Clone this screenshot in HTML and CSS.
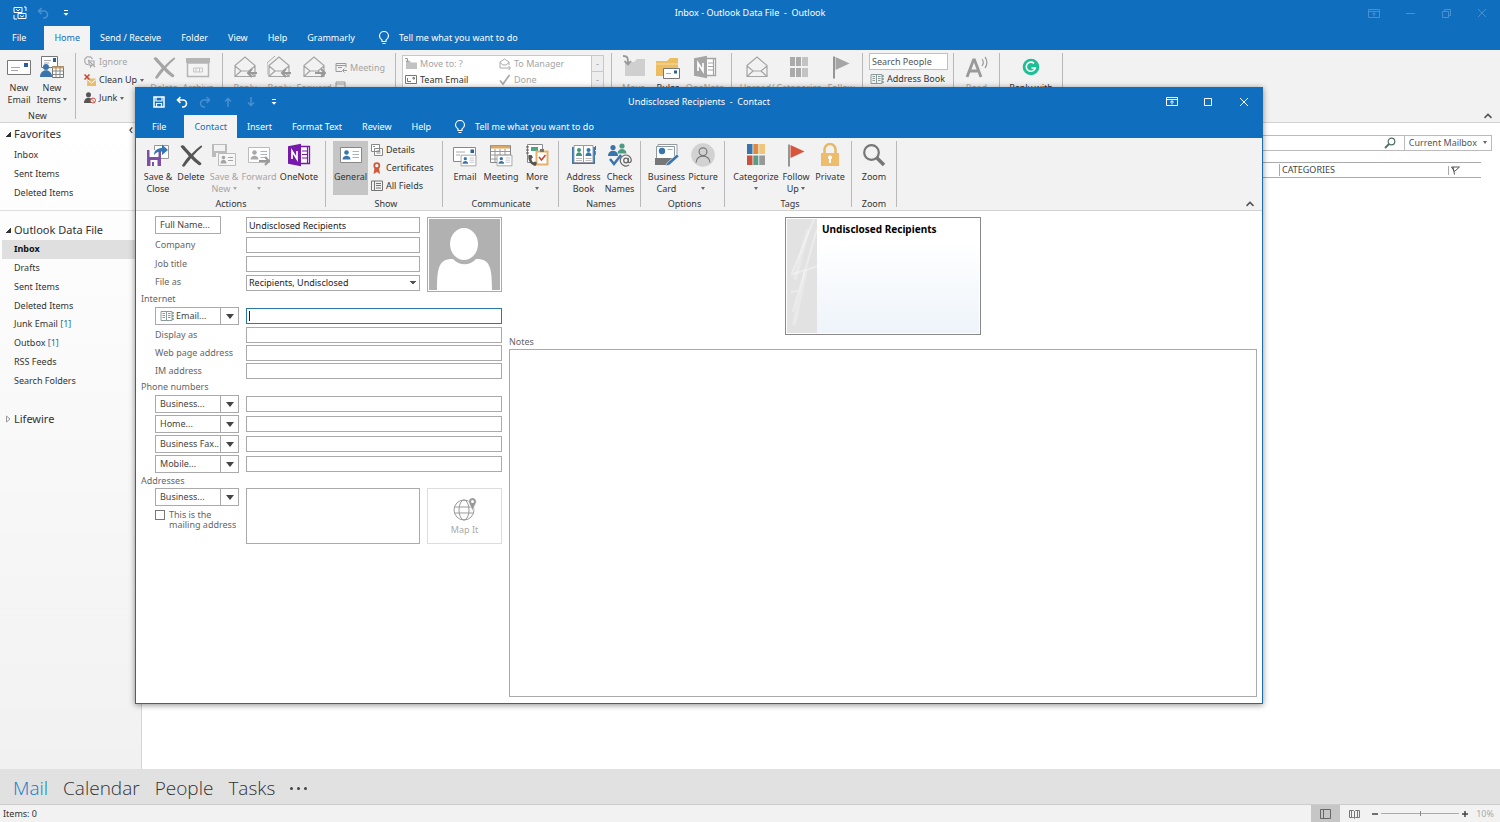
FILE: index.html
```html
<!DOCTYPE html>
<html lang="en">
<head>
    <meta charset="UTF-8" />
    <meta name="viewport" content="width=device-width, initial-scale=1.0"/>
    <title>Inbox - Outlook Data File - Outlook</title>
    <link rel="stylesheet" href="styles.css">
</head>
<body>

<!-- shared icons -->
<svg class="sprite" aria-hidden="true">
    <symbol id="i-bulb" viewBox="0 0 12 14"><path d="M4 10.5V9C2.5 8 1.5 6.7 1.5 5a4.5 4.5 0 0 1 9 0c0 1.7-1 3-2.5 4v1.5zM4.5 12.5h3" fill="none" stroke="currentColor" stroke-width="1.2"/></symbol>
    <symbol id="i-custom" viewBox="0 0 6 8"><path d="M1 1.5h4" stroke="currentColor"/><path d="M0.5 4h5L3 6.8z" fill="currentColor"/></symbol>
    <symbol id="i-undo" viewBox="0 0 12 12"><path d="M4.5 1L1.5 4l3 3M1.5 4H7a3.3 3.3 0 0 1 0 7H6" fill="none" stroke="currentColor" stroke-width="1.6"/></symbol>
    <symbol id="i-redo" viewBox="0 0 12 12"><path d="M7.5 1l3 3-3 3M10.5 4H5a3.3 3.3 0 0 0 0 7h1" fill="none" stroke="currentColor" stroke-width="1.4"/></symbol>
    <symbol id="i-ribbon" viewBox="0 0 12 9"><path d="M.5.5h11v8H.5zM.5 2.5h11M6 7.5V4M4.2 5.3L6 3.7l1.8 1.6" fill="none" stroke="currentColor"/></symbol>
    <symbol id="i-close" viewBox="0 0 10 10"><path d="M1 1l8 8M9 1L1 9" stroke="currentColor"/></symbol>
    <symbol id="i-up" viewBox="0 0 8 8"><path d="M1.2 5.5L4 2.7l2.8 2.8" fill="none" stroke="currentColor" stroke-width="1.2"/></symbol>
    <symbol id="i-x" viewBox="0 0 24 24"><path d="M1.5 3.5C3 1.5 4.5 2 5.5 3.3 8 6.5 10.5 9 12.5 11c3-3.2 6-6 9.5-8.5 1 0 1.5 1 1 1.5-3.5 3-6 5.5-8.8 8.8 2.5 2.7 5 5 8 7.2.8 1.3-1 3-2.5 2-3-2-5.5-4.5-7.7-6.7-2.5 3-4.5 5.5-6.5 8.2-1.5.5-2.8-.5-2.2-1.6 2-3.2 4-5.9 6.5-8.7C7 9.5 4 7 1.5 3.5z" fill="currentColor"/></symbol>
    <symbol id="i-onenote" viewBox="0 0 24 24"><path d="M13 3.5h9.5v17H13" fill="#fff" stroke="currentColor" stroke-width="1.3"/><path d="M15 8h5M15 11.5h5M15 15h5M20.5 4v16" stroke="currentColor" stroke-width="1.2"/><path d="M1 3.2L14 .8v22.4L1 20.8z" fill="currentColor"/><path d="M5 16V8l5 8V8" fill="none" stroke="#fff" stroke-width="1.7"/></symbol>
    <symbol id="i-book" viewBox="0 0 14 12"><path d="M1 1.5h11v9H1zM6.5 1.5v9M2.5 3.5H5M2.5 5.5H5M2.5 7.5H5M8 3.5h2.5M8 5.5h2.5M8 7.5h2.5" fill="none" stroke="#8d9a9a"/><path d="M13 2v8.5" stroke="#3b7a6a" stroke-dasharray="2 1"/></symbol>
    <symbol id="i-card" viewBox="0 0 24 24"><path d="M1.5 4.5h21v15h-21z" fill="#fff" stroke="currentColor"/><circle cx="7.5" cy="9.5" r="2.3" fill="var(--person, #3a74ad)"/><path d="M3.5 16.5c0-5 8-5 8 0z" fill="var(--person, #3a74ad)"/><path d="M13.5 8.5H20M13.5 11.5H20M13.5 14.5H20" stroke="#a9b4bf"/></symbol>
    <symbol id="i-open" viewBox="0 0 24 24"><path d="M2 10.5L12 2l10 8.5v11H2zM2 11l6 5h8l6-5M2 21.5L8 16M22 21.5L16 16" fill="none" stroke="currentColor" stroke-width="1.2"/></symbol>
    <symbol id="i-flag" viewBox="0 0 24 24"><path d="M5 1.5v22" stroke="#777" stroke-width="1.5"/><path d="M6.5 2l14 6.5-14 6.5z" fill="currentColor"/></symbol>
</svg>

<!-- main window -->
<header class="top">
    <div class="titlebar">
        <div class="quick">
            <button aria-label="Outlook"><svg width="14" height="14" viewBox="0 0 14 14" fill="none" stroke="#fff"><path d="M1 1.5h8v5H1zM5 7.5h8v5H5zM1 9v4h3M11 1h2v4M3 3l2 2 2-2M7 9.5l2 1.5 2-1.5"/></svg></button>
            <button class="dim" aria-label="Undo"><svg width="12" height="12"><use href="#i-undo"/></svg></button>
            <button aria-label="Customize"><svg width="6" height="8"><use href="#i-custom"/></svg></button>
        </div>
        <h1>Inbox - Outlook Data File&nbsp; -&nbsp; Outlook</h1>
        <div class="window-buttons dim">
            <button aria-label="Ribbon options"><svg width="12" height="9"><use href="#i-ribbon"/></svg></button>
            <button aria-label="Minimize"><svg width="9" height="9"><path d="M0 4.5h9" stroke="currentColor"/></svg></button>
            <button aria-label="Restore"><svg width="9" height="9" fill="none" stroke="currentColor"><path d="M.5 2.5h6v6h-6zM2.5 2.5v-2h6v6h-2"/></svg></button>
            <button aria-label="Close"><svg width="10" height="10"><use href="#i-close"/></svg></button>
        </div>
    </div>
    <nav class="tabs">
        <button class="file">File</button>
        <button class="active">Home</button>
        <button>Send / Receive</button>
        <button>Folder</button>
        <button>View</button>
        <button>Help</button>
        <button>Grammarly</button>
        <button class="tell"><svg width="12" height="14"><use href="#i-bulb"/></svg>Tell me what you want to do</button>
    </nav>
</header>

<div class="ribbon main-ribbon">
    <div class="group g-new">
        <div class="tools">
            <button class="tool"><svg width="24" height="24" viewBox="0 0 24 24"><path d="M.5 5.5h23v14H.5z" fill="#fff" stroke="#777"/><path d="M17 8h4v4h-4z" fill="#2b5f95"/><path d="M4 12.5h9M4 15.5h7" stroke="#aaa"/></svg><span>New<br>Email</span></button>
            <button class="tool"><svg width="24" height="24" viewBox="0 0 24 24"><path d="M1.5 1.5h16v11h-16z" fill="#fff" stroke="#777"/><path d="M13 3h3v4h-3z" fill="#2b5f95"/><path d="M4 5.5h7M4 8h5" stroke="#aaa"/><circle cx="6" cy="12" r="3" fill="#3a74ad"/><path d="M0 22c0-9 12-9 12 0z" fill="#3a74ad"/><path d="M12.5 11.5h11v11h-11z" fill="#fff" stroke="#777"/><path d="M12.5 12.5h11" stroke="#e0a252" stroke-width="2"/><path d="M12.5 16h11M12.5 19.5h11M16 12v10M20 12v10" stroke="#888"/></svg><span>New<br>Items <i class="caret"></i></span></button>
        </div>
        <div class="group-name">New</div>
    </div>
    <div class="group g-delete">
        <div class="tools">
            <div class="small-tools">
                <button class="off"><svg width="12" height="12" viewBox="0 0 12 12" fill="none" stroke="#aaa" stroke-width="1.2"><path d="M4 8.5H2.5L.8 6V3L3 .8h3.5L8.5 3M5 5h5v4H8l-1.5 2V9H5z"/><path d="M4 4l7 7"/></svg>Ignore</button>
                <button><svg width="12" height="12" viewBox="0 0 12 12"><path d="M3.5 4.5H12V12H3z" fill="#e9bd6b"/><path d="M4 6l3.5 3L12 5.5" fill="none" stroke="#fff"/><path d="M.5.5l5 5M5.5.5l-5 5" stroke="#c8432f" stroke-width="1.5"/></svg>Clean Up <i class="caret"></i></button>
                <button><svg width="12" height="12" viewBox="0 0 12 12"><circle cx="4.5" cy="2.8" r="2.5" fill="#555"/><path d="M0 11c0-7 9-7 9 0z" fill="#555"/><circle cx="9" cy="8.5" r="2.5" fill="#fff" stroke="#d0493e"/><path d="M7.5 7l3 3" stroke="#d0493e"/></svg>Junk <i class="caret"></i></button>
            </div>
            <button class="tool off"><svg class="mid" width="24" height="24"><use href="#i-x"/></svg><span>Delete</span></button>
            <button class="tool off"><svg width="24" height="24" viewBox="0 0 24 24"><path d="M0 3h24v5H0z" fill="#b5b5b5"/><path d="M1.5 8h21v13.5h-21z" fill="#f4f4f4" stroke="#b5b5b5" stroke-width="1.5"/><path d="M7.5 13h9v4h-9zM10 13v4M13.5 13v4" fill="none" stroke="#c5c5c5"/></svg><span>Archive</span></button>
        </div>
    </div>
    <div class="group g-respond">
        <div class="tools">
            <button class="tool off"><svg width="24" height="24"><use href="#i-open"/><path class="arrow" d="M24 18h-9m4-4l-4 4 4 4"/></svg><span>Reply</span></button>
            <button class="tool off"><svg width="24" height="24"><use href="#i-open"/><path d="M0 20V8l8-7" fill="none" stroke="#aaa"/><path class="arrow" d="M24 18h-9m4-4l-4 4 4 4"/></svg><span>Reply</span></button>
            <button class="tool off"><svg width="24" height="24"><use href="#i-open"/><path class="arrow" d="M13 18h10m-4-4l4 4-4 4"/></svg><span>Forward</span></button>
            <div class="small-tools respond-more">
                <button class="off"><svg width="12" height="12" viewBox="0 0 12 12" fill="none" stroke="#999"><path d="M7 9.5H1v-8h10v4M1 3.5h10M3 5.5h4M12 8.5H8m1.5-2l-2 2 2 2"/></svg>Meeting</button>
                <button class="off" aria-label="More"><svg width="12" height="12" viewBox="0 0 12 12" fill="none" stroke="#999"><path d="M1 2h9v7H1zM1 4h9"/></svg></button>
            </div>
        </div>
    </div>
    <div class="group g-steps">
        <div class="steps">
            <div class="step-list">
                <button class="off"><svg width="12" height="12" viewBox="0 0 12 12"><path d="M1 3h4l1 1.5h6V11H1z" fill="#c2c2c2"/><path d="M0 .5h2.5v3M1 2.5L2.5 4 4 2.5" fill="none" stroke="#999"/></svg>Move to: ?</button>
                <button class="off"><svg width="12" height="12" viewBox="0 0 12 12" fill="none" stroke="#aaa"><path d="M7 10H1V4l4.5-3L10 4v3M1 4.5L4 7h3l3-2.5M7 10h4m-1.5-2l2 2-2 2"/></svg>To Manager</button>
                <button><svg width="12" height="12" viewBox="0 0 12 12" fill="none" stroke="#777"><path d="M.5 1.5h11v8H.5zM8 3.5h1.5V5H8zM2.5 4v3.5H6"/></svg>Team Email</button>
                <button class="off"><svg width="12" height="12" viewBox="0 0 12 12"><path d="M1 6.5l3 3.5 6.5-9" fill="none" stroke="#aaa" stroke-width="1.8"/></svg>Done</button>
            </div>
            <div class="step-scroll"><button aria-label="Previous">-</button><button aria-label="Next">-</button></div>
        </div>
    </div>
    <div class="group g-move">
        <div class="tools">
            <button class="tool off"><svg width="24" height="24" viewBox="0 0 24 24"><path d="M3 7h9l3-3h8v17H3z" fill="#cfcfcf"/><path d="M1 1c5 0 5 2 5 8M2.5 6L6 9.5 9 6" fill="none" stroke="#999" stroke-width="1.8"/></svg><span>Move</span></button>
            <button class="tool"><svg width="24" height="24" viewBox="0 0 24 24"><path d="M0 6h11l3-3h8v18H0z" fill="#edbd62"/><path d="M0 9h22" stroke="#f7dca3"/><path d="M7.5 13.5h16v10h-16z" fill="#fff" stroke="#777"/><path d="M18 15.5h3v3h-3z" fill="#2b5f95"/><path d="M10 18.5h5" stroke="#aaa"/></svg><span>Rules</span></button>
            <button class="tool off"><svg class="mid" width="24" height="24"><use href="#i-onenote"/></svg><span>OneNote</span></button>
        </div>
    </div>
    <div class="group g-tags">
        <div class="tools">
            <button class="tool off"><svg width="24" height="24"><use href="#i-open"/></svg><span>Unread/</span></button>
            <button class="tool off"><svg width="24" height="24" viewBox="0 0 24 24"><path d="M3 2h5v9H3zM9 2h5v9H9zM3 13h5v9H3zM9 13h5v9H9z" fill="#aaa"/><path d="M15 2h6v9h-6zM15 13h6v9h-6z" fill="#c3c3c3"/></svg><span>Categorize</span></button>
            <button class="tool off"><svg width="24" height="24"><use href="#i-flag"/></svg><span>Follow</span></button>
        </div>
    </div>
    <div class="group g-find">
        <input type="text" placeholder="Search People" aria-label="Search People">
        <div class="small-tools"><button><svg width="14" height="12"><use href="#i-book"/></svg>Address Book</button></div>
    </div>
    <div class="group g-speech">
        <div class="tools">
            <button class="tool off"><svg width="24" height="24" viewBox="0 0 24 24" fill="none" stroke="#999"><path d="M2 22L8.5 5h1L16 22M4.5 16h9" stroke-width="2.8"/><path d="M17 4c1.5 2 1.5 5 0 7M20 2c2.5 3 2.5 8 0 11" stroke-width="1.2"/></svg><span>Read</span></button>
        </div>
    </div>
    <div class="group g-grammar">
        <div class="tools">
            <button class="tool"><svg width="24" height="24" viewBox="0 0 24 24"><circle cx="12" cy="12" r="8.3" fill="#1dbf94"/><path d="M15 8.3A4.6 4.6 0 1 0 16.3 13H12.5" fill="none" stroke="#fff" stroke-width="1.6"/></svg><span>Reply with</span></button>
        </div>
    </div>
    <button class="collapse" aria-label="Collapse ribbon"><svg width="10" height="10"><use href="#i-up"/></svg></button>
</div>

<main class="workspace">
    <aside class="folders">
        <button class="fold" aria-label="Minimize folder pane">‹</button>
        <h2><i class="open"></i>Favorites</h2>
        <ul class="favorites">
            <li><a href="#">Inbox</a></li>
            <li><a href="#">Sent Items</a></li>
            <li><a href="#">Deleted Items</a></li>
        </ul>
        <h2><i class="open"></i>Outlook Data File</h2>
        <ul class="data-file">
            <li class="current"><a href="#">Inbox</a></li>
            <li><a href="#">Drafts</a></li>
            <li><a href="#">Sent Items</a></li>
            <li><a href="#">Deleted Items</a></li>
            <li><a href="#">Junk Email <b>[1]</b></a></li>
            <li><a href="#">Outbox <b>[1]</b></a></li>
            <li><a href="#">RSS Feeds</a></li>
            <li><a href="#">Search Folders</a></li>
        </ul>
        <h2><i><svg width="5" height="8"><path d="M.5 1l3.5 3L.5 7z" fill="none" stroke="#999"/></svg></i>Lifewire</h2>
    </aside>
    <section class="messages">
        <div class="search">
            <input type="text" aria-label="Search">
            <svg width="12" height="12" viewBox="0 0 12 12" fill="none" stroke="#4d7068"><circle cx="7.5" cy="4.5" r="3.3" stroke-width="1.2"/><path d="M5 7l-4 4" stroke-width="1.8"/></svg>
            <button>Current Mailbox <i class="caret"></i></button>
        </div>
        <div class="columns">
            <span class="category">CATEGORIES</span>
            <span class="flagged"><svg width="9" height="9" viewBox="0 0 9 9" fill="none" stroke="#555"><path d="M.5 1h8L3.5 5.5zM2 1l1.5 7.5"/></svg></span>
        </div>
    </section>
</main>

<nav class="modules">
    <a href="#" class="current">Mail</a>
    <a href="#">Calendar</a>
    <a href="#">People</a>
    <a href="#">Tasks</a>
    <button aria-label="More"><i></i><i></i><i></i></button>
</nav>

<footer class="status">
    <span>Items: 0</span>
    <div class="view-tools">
        <button class="active" aria-label="Normal view"><svg width="11" height="10" fill="none" stroke="#666"><path d="M.5.5h10v9H.5zM3.5.5v9"/></svg></button>
        <button aria-label="Reading view"><svg width="11" height="10" viewBox="0 0 11 10"><path d="M.5 1.5h4l1 1 1-1h4v7h-4l-1 1-1-1h-4zM5.5 2v7M2.5 2v6M8.5 2v6" fill="none" stroke="#777"/></svg></button>
        <button class="zoom-step" aria-label="Zoom out"><svg width="6" height="6"><path d="M0 3h6" stroke="#444" stroke-width="1.5"/></svg></button>
        <input type="range" min="0" max="100" value="50" aria-label="Zoom">
        <button class="zoom-step" aria-label="Zoom in"><svg width="6" height="6"><path d="M0 3h6M3 0v6" stroke="#444" stroke-width="1.5"/></svg></button>
        <span class="percent">10%</span>
    </div>
</footer>

<!-- contact window -->
<div class="contact-window">
    <header class="top">
        <div class="titlebar">
            <div class="quick">
                <button aria-label="Save"><svg width="12" height="12" viewBox="0 0 12 12"><path d="M1 1h10v10H1z" fill="none" stroke="#fff" stroke-width="1.5"/><path d="M3 1v4h6V1M3.5 11V7.5h5V11" fill="none" stroke="#fff" stroke-width="1.2"/></svg></button>
                <button aria-label="Undo"><svg width="12" height="12"><use href="#i-undo"/></svg></button>
                <button class="dim" aria-label="Redo"><svg width="12" height="12"><use href="#i-redo"/></svg></button>
                <button class="dim" aria-label="Previous item"><svg width="8" height="10" fill="none" stroke="currentColor" stroke-width="1.5"><path d="M4 10V1.5M1 4.5l3-3 3 3"/></svg></button>
                <button class="dim" aria-label="Next item"><svg width="8" height="10" fill="none" stroke="currentColor" stroke-width="1.5"><path d="M4 0v8.5M1 5.5l3 3 3-3"/></svg></button>
                <button aria-label="Customize"><svg width="6" height="8"><use href="#i-custom"/></svg></button>
            </div>
            <h1>Undisclosed Recipients&nbsp; -&nbsp; Contact</h1>
            <div class="window-buttons">
                <button aria-label="Ribbon options"><svg width="12" height="9"><use href="#i-ribbon"/></svg></button>
                <button aria-label="Maximize"><svg width="8" height="8"><path d="M.5.5h7v7h-7z" fill="none" stroke="currentColor"/></svg></button>
                <button aria-label="Close"><svg width="10" height="10"><use href="#i-close"/></svg></button>
            </div>
        </div>
        <nav class="tabs">
            <button class="file">File</button>
            <button class="active">Contact</button>
            <button>Insert</button>
            <button>Format Text</button>
            <button>Review</button>
            <button>Help</button>
            <button class="tell"><svg width="12" height="14"><use href="#i-bulb"/></svg>Tell me what you want to do</button>
        </nav>
    </header>

    <div class="ribbon">
        <div class="group g-actions">
            <div class="tools">
                <button class="tool"><svg width="24" height="24" viewBox="0 0 24 24"><path d="M8.5 2.5h14v13h-14z" fill="#fff" stroke="#999"/><path d="M1 7h14v16H1z" fill="#7d4fa5"/><path d="M3.5 7h9v7h-9zM4.5 17h7v6h-7z" fill="#fff"/><path d="M6 19h2v4H6z" fill="#7d4fa5"/><path d="M8 12c0-5 4-7 8-7V1.5L22 7l-6 5V8.5c-4 0-6 1-8 3.5z" fill="#3576b0"/></svg><span>Save &amp;<br>Close</span></button>
                <button class="tool"><svg class="dark" width="24" height="24"><use href="#i-x"/></svg><span>Delete</span></button>
                <button class="tool off"><svg width="24" height="24" viewBox="0 0 24 24"><path d="M0 1h15v13H0z" fill="#bbb"/><path d="M2 2h11v6H2zM4 10h7v4H4z" fill="#f2f2f2"/><path d="M6.5 10.5h17v12h-17z" fill="#f6f6f6" stroke="#bbb"/><circle cx="11.5" cy="14.5" r="1.8" fill="#a5a5a5"/><path d="M8.5 20.5c0-5 6-5 6 0zM16 14h5v1h-5zM16 17h5v1h-5z" fill="#a5a5a5"/></svg><span>Save &amp;<br>New <i class="caret"></i></span></button>
                <button class="tool off"><svg class="gray-card" width="24" height="24"><use href="#i-card"/><path class="arrow" d="M12 18h10m-4-4l4 4-4 4"/></svg><span>Forward<br><i class="caret"></i></span></button>
                <button class="tool"><svg class="purple" width="24" height="24"><use href="#i-onenote"/></svg><span>OneNote</span></button>
            </div>
            <div class="group-name">Actions</div>
        </div>
        <div class="group g-show">
            <div class="tools">
                <button class="tool active"><svg width="24" height="24"><use href="#i-card"/></svg><span>General</span></button>
                <div class="small-tools">
                    <button><svg width="12" height="12" viewBox="0 0 12 12" fill="#fff" stroke="#888"><path d="M.5.5h8v7h-8zM3.5 4.5h8v7h-8z"/><path d="M2 2.5h2M5.5 7h4M5.5 9h4"/></svg>Details</button>
                    <button><svg width="12" height="12" viewBox="0 0 12 12"><path d="M3.5 6L2.5 12 6 10l3 2-1-6z" fill="#d2593a"/><circle cx="5.8" cy="3.7" r="2.5" fill="#fff" stroke="#d2593a" stroke-width="1.8"/></svg>Certificates</button>
                    <button><svg width="12" height="12" viewBox="0 0 12 12" fill="none" stroke="#777"><path d="M.5 1h11v9.5H.5zM3.5 1v9.5M5 3.5h5M5 5.5h5M5 8h5"/></svg>All Fields</button>
                </div>
            </div>
            <div class="group-name">Show</div>
        </div>
        <div class="group g-communicate">
            <div class="tools">
                <button class="tool"><svg width="24" height="24" viewBox="0 0 24 24"><path d="M.5 4.5h22v14H.5z" fill="#fff" stroke="#888"/><path d="M17.5 6.5H21V10h-3.5z" fill="#2b5f95"/><path d="M3 9h9M3 12h4" stroke="#aaa"/><use href="#i-card" x="7" y="9" width="17" height="17"/></svg><span>Email</span></button>
                <button class="tool"><svg width="24" height="24" viewBox="0 0 24 24"><path d="M1.5 2.5h20v17h-20z" fill="#fff" stroke="#888"/><path d="M2 4h19" stroke="#dda763" stroke-width="3"/><path d="M2 8.5h19M2 12h19M2 16h19M6 6v13M11 6v13M16 6v13" stroke="#999"/><use href="#i-card" x="7" y="9" width="17" height="17"/></svg><span>Meeting</span></button>
                <button class="tool"><svg width="24" height="24" viewBox="0 0 24 24"><path d="M2.5 1.5h15v18h-15z" fill="#fff" stroke="#888"/><path d="M1 4h3M1 7h3M1 10h3" stroke="#555"/><path d="M6 4h7v4H6z" fill="#4aa585"/><path d="M11.5 8.5h11v13h-11z" fill="#fff" stroke="#e3b36b" stroke-width="2"/><path d="M15 6h4v3h-4z" fill="#777"/><path d="M14 14l2.5 3 4-5" fill="none" stroke="#c8432f" stroke-width="1.5"/><path d="M3.5 12c-1 5 2 10 7 11l1.5-3-2-1.5-1.5 1C7 18.5 6.5 17 6.5 15.5L8 14.5 6.5 12z" fill="#555"/></svg><span>More<br><i class="caret"></i></span></button>
            </div>
            <div class="group-name">Communicate</div>
        </div>
        <div class="group g-names">
            <div class="tools">
                <button class="tool"><svg width="24" height="24" viewBox="0 0 24 24"><path d="M0 4h23v17H0z" fill="#3b78ad"/><path d="M2 2.5h9.5v17H2zM11.5 2.5H21v17h-9.5z" fill="#fff" stroke="#99a"/><circle cx="7" cy="7" r="2" fill="#3f9478"/><path d="M4 13c0-5 6-5 6 0z" fill="#3f9478"/><circle cx="16.5" cy="7" r="2" fill="#3a74ad"/><path d="M13.5 13c0-5 6-5 6 0z" fill="#3a74ad"/><path d="M4 15.5h6M13.5 15.5h6M4 17.5h6M13.5 17.5h6" stroke="#bbb"/><path d="M23.5 3v4" stroke="#c8432f"/><path d="M23.5 8v4" stroke="#4aa585"/></svg><span>Address<br>Book</span></button>
                <button class="tool"><svg width="24" height="24" viewBox="0 0 24 24"><circle cx="5" cy="4.5" r="2.6" fill="#3a74ad"/><path d="M0 13c0-7 10-7 10 0z" fill="#3a74ad"/><circle cx="14" cy="3" r="2.6" fill="#4c9c83"/><path d="M9.5 10.5c0-6 9-6 9 0z" fill="#4c9c83"/><path d="M2 16l4 5 7-9" fill="none" stroke="#3a74ad" stroke-width="2.5"/><circle cx="18" cy="17.5" r="2.3" fill="none" stroke="#666" stroke-width="1.2"/><path d="M20.3 15v4c1.5 1.5 3 0 3-2A5.5 5.5 0 1 0 21 22" fill="none" stroke="#666" stroke-width="1.2"/></svg><span>Check<br>Names</span></button>
            </div>
            <div class="group-name">Names</div>
        </div>
        <div class="group g-options">
            <div class="tools">
                <button class="tool"><svg width="24" height="24" viewBox="0 0 24 24"><path d="M3 1.5h19v13H3z" fill="#fff" stroke="#999"/><path d="M1.5 3.5h18v12h-18z" fill="#fff" stroke="#89a"/><circle cx="7" cy="8" r="3.2" fill="#3a74ad"/><path d="M12.5 6.5h5" stroke="#aaa"/><path d="M0 15h18l-5 7H0z" fill="#777"/><path d="M12 20l10-9 2 2.5-9.5 8.5-4 1z" fill="#3a74ad" stroke="#fff" stroke-width=".6"/></svg><span>Business<br>Card</span></button>
                <button class="tool"><svg width="26" height="26" viewBox="0 0 26 26"><circle cx="13" cy="13" r="12.8" fill="#d2d2d2"/><circle cx="13" cy="9.5" r="4.2" fill="none" stroke="#777" stroke-width="1.3"/><path d="M5.5 21c0-9 15-9 15 0" fill="none" stroke="#777" stroke-width="1.3"/></svg><span>Picture<br><i class="caret"></i></span></button>
            </div>
            <div class="group-name">Options</div>
        </div>
        <div class="group g-contact-tags">
            <div class="tools">
                <button class="tool"><svg width="24" height="24" viewBox="0 0 24 24"><path d="M3 1h5.5v10H3z" fill="#3a74ad"/><path d="M9.3 1h5v10h-5z" fill="#df8a3c"/><path d="M15.2 1H21v10h-5.8z" fill="#efc67a"/><path d="M3 12.5h5.5V22H3z" fill="#c9523f"/><path d="M9.3 12.5h5V22h-5z" fill="#5a9f85"/><path d="M15.2 12.5H21V22h-5.8z" fill="#999"/></svg><span>Categorize<br><i class="caret"></i></span></button>
                <button class="tool"><svg class="red" width="24" height="24"><use href="#i-flag"/></svg><span>Follow<br>Up <i class="caret"></i></span></button>
                <button class="tool"><svg width="24" height="24" viewBox="0 0 24 24"><path d="M6.5 11V6.5a5.5 5.5 0 0 1 11 0V11" fill="none" stroke="#e7b865" stroke-width="2.5"/><path d="M3 10h18v13H3z" fill="#edbd6c"/><circle cx="12" cy="14.5" r="2" fill="#fff"/><path d="M11 15h2v5h-2z" fill="#fff"/></svg><span>Private</span></button>
            </div>
            <div class="group-name">Tags</div>
        </div>
        <div class="group g-zoom">
            <div class="tools">
                <button class="tool"><svg width="24" height="24" viewBox="0 0 24 24" fill="none" stroke="#777"><circle cx="9.5" cy="9.5" r="7.3" stroke-width="2.2"/><path d="M15 15l7 7" stroke-width="3.5"/></svg><span>Zoom</span></button>
            </div>
            <div class="group-name">Zoom</div>
        </div>
        <button class="collapse" aria-label="Collapse ribbon"><svg width="10" height="10"><use href="#i-up"/></svg></button>
    </div>

    <div class="contact-body">
        <form class="fields">
            <div class="cell"><button type="button" class="name-button">Full Name...</button></div>
            <div class="cell"><input type="text" value="Undisclosed Recipients" aria-label="Full Name"></div>
            <button type="button" class="avatar" aria-label="Contact picture"><svg viewBox="0 0 71 71"><path d="M0 0h71v71H0z" fill="#b1b1b1"/><ellipse cx="35" cy="25" rx="14" ry="16" fill="#fff"/><path d="M8 71c0-25 3-31 16-31 6 7 17 7 23 0 13 0 16 6 16 31z" fill="#fff"/></svg></button>
            <label for="company">Company</label>
            <div class="cell"><input type="text" id="company"></div>
            <label for="job">Job title</label>
            <div class="cell"><input type="text" id="job"></div>
            <label for="fileas">File as</label>
            <div class="cell"><select id="fileas"><option>Recipients, Undisclosed</option></select></div>

            <h3>Internet</h3>
            <div class="cell split"><button type="button"><svg width="14" height="12"><use href="#i-book"/></svg>Email...</button><button type="button" aria-label="Choose email"><i class="arrow-down"></i></button></div>
            <div class="cell wide"><input type="text" class="focus" aria-label="Email"></div>
            <label for="display">Display as</label>
            <div class="cell wide"><input type="text" id="display"></div>
            <label for="web">Web page address</label>
            <div class="cell wide"><input type="text" id="web"></div>
            <label for="im">IM address</label>
            <div class="cell wide"><input type="text" id="im"></div>

            <h3>Phone numbers</h3>
            <div class="cell split"><button type="button">Business...</button><button type="button" aria-label="Choose number"><i class="arrow-down"></i></button></div>
            <div class="cell wide"><input type="tel" aria-label="Business"></div>
            <div class="cell split"><button type="button">Home...</button><button type="button" aria-label="Choose number"><i class="arrow-down"></i></button></div>
            <div class="cell wide"><input type="tel" aria-label="Home"></div>
            <div class="cell split"><button type="button">Business Fax..</button><button type="button" aria-label="Choose number"><i class="arrow-down"></i></button></div>
            <div class="cell wide"><input type="tel" aria-label="Business Fax"></div>
            <div class="cell split"><button type="button">Mobile...</button><button type="button" aria-label="Choose number"><i class="arrow-down"></i></button></div>
            <div class="cell wide"><input type="tel" aria-label="Mobile"></div>

            <h3>Addresses</h3>
            <div class="address-kind">
                <div class="split"><button type="button">Business...</button><button type="button" aria-label="Choose address"><i class="arrow-down"></i></button></div>
                <label class="mailing"><input type="checkbox"><span>This is the<br>mailing address</span></label>
            </div>
            <textarea class="address" aria-label="Address"></textarea>
            <button type="button" class="map" disabled><svg width="24" height="24" viewBox="0 0 24 24" fill="none" stroke="#999"><circle cx="11" cy="13" r="10"/><ellipse cx="11" cy="13" rx="5" ry="10"/><path d="M1.5 10h19M1.5 16h19"/><path d="M19.5 14l-3.5-8a3.8 3.8 0 1 1 7 0z" fill="#999" stroke="#fff" stroke-width=".6"/><circle cx="19.5" cy="4.5" r="1.5" fill="#fff" stroke="none"/></svg>Map It</button>
        </form>

        <section class="notes">
            <div class="business-card">
                <svg width="30" height="113" viewBox="0 0 30 113" preserveAspectRatio="none" fill="none" stroke="#fff"><path d="M27 0L5 54M30 10L6 92M4 55l26-8M4 72l9-1" opacity=".35" stroke-width="2"/><path d="M21 10L8 60M19 50L7 105" opacity=".25" stroke-width="4"/></svg>
                <strong>Undisclosed Recipients</strong>
            </div>
            <label for="notes">Notes</label>
            <textarea id="notes"></textarea>
        </section>
    </div>
</div>

</body>
</html>
```
FILE: styles.css
```css
* {
    box-sizing: border-box;
}
body {
    position: relative;
    display: flex;
    flex-direction: column;
    height: 100vh;
    margin: 0;
    overflow: hidden;
    background: #fff;
    color: #333;
    font: 9px/12px "Noto Sans", "Open Sans", sans-serif;
}
button {
    margin: 0;
    padding: 0;
    border: 0;
    background: none;
    color: inherit;
    font: inherit;
    white-space: nowrap;
}
input, select, textarea {
    margin: 0;
    border-radius: 0;
    font: inherit;
    color: #222;
    outline: none;
}
h1, h2, h3, ul {
    margin: 0;
    padding: 0;
    font-size: inherit;
    font-weight: normal;
    list-style: none;
}
a {
    color: inherit;
    text-decoration: none;
}
svg {
    display: block;
    flex-shrink: 0;
}
.sprite {
    position: absolute;
    width: 0;
    height: 0;
}

/* small triangles */
.caret {
    display: inline-block;
    border: 2px solid transparent;
    border-top: 3px solid #666;
    border-bottom: 0;
    vertical-align: 2px;
}
.off .caret {
    border-top-color: #aaa;
}
.arrow-down {
    border: 4px solid transparent;
    border-top: 5px solid #444;
    border-bottom: 0;
}

/* title bar and tabs */
.top {
    background: #106ebe;
    color: #fff;
}
.titlebar {
    display: grid;
    grid-template-columns: 1fr auto 1fr;
    align-items: center;
    height: 26px;
}
.quick {
    display: flex;
    align-items: center;
    padding-left: 8px;
}
.quick button {
    display: flex;
    justify-content: center;
    width: 23px;
}
.dim {
    color: #4a90d0;
}
.window-buttons {
    display: flex;
    justify-content: flex-end;
}
.window-buttons button {
    display: flex;
    align-items: center;
    justify-content: center;
    width: 36px;
    height: 24px;
}
.tabs {
    display: flex;
    height: 24px;
}
.tabs button {
    padding: 0 10px;
}
.tabs .file {
    padding: 0 18px 0 12px;
}
.tabs .active {
    background: #f3f3f3;
    color: #106ebe;
}
.tabs .tell {
    display: flex;
    align-items: center;
    gap: 9px;
    padding-left: 13px;
}

/* ribbon */
.ribbon {
    display: flex;
    padding: 3px 0 0;
    height: 73px;
    background: #f2f2f2;
    border-bottom: 1px solid #d2d2d2;
}
.group {
    flex-shrink: 0;
    height: 66px;
    padding: 0 3px;
    border-right: 1px solid #b9b9b9;
}
.tools {
    display: grid;
    grid-auto-flow: column;
    height: 54px;
}
.tool {
    display: flex;
    flex-direction: column;
    align-items: center;
    gap: 4px;
    height: 54px;
    padding-top: 2px;
    text-align: center;
}
.tool svg {
    height: 24px;
    color: #888;
}
.tool.active {
    background: #c5c5c5;
}
.tool .mid {
    color: #999;
}
.tool .dark {
    color: #555;
}
.tool .purple {
    color: #7719aa;
}
.tool .red {
    color: #d8543c;
}
.tool.off .gray-card {
    --person: #aaa;
    color: #bbb;
}
.off, .tool.off svg {
    color: #a5a5a5;
}
.arrow {
    fill: none;
    stroke: #999;
    stroke-width: 2;
}
.group-name {
    margin-top: 3px;
    text-align: center;
}
.small-tools {
    display: flex;
    flex-direction: column;
}
.small-tools button {
    display: flex;
    align-items: center;
    gap: 3px;
    height: 18px;
}
.collapse {
    align-self: flex-end;
    margin: 0 7px 1px auto;
    color: #555;
}
.main-ribbon .tool {
    gap: 3px;
}

.g-new { width: 76px; }
.g-new .tools { grid-template-columns: 32px 34px; }
.g-delete { width: 147px; padding-left: 8px; }
.g-delete .tools { grid-template-columns: 63px 34px 34px; }
.g-respond { width: 173px; padding-left: 5px; }
.g-respond .tools { grid-template-columns: 34px 34px 36px 60px; }
.g-steps { width: 216px; padding-left: 6px; }
.g-move { width: 120px; padding-left: 4px; }
.g-move .tools { grid-template-columns: 35px 34px 40px; }
.g-tags { width: 131px; padding-left: 4px; }
.g-tags .tools { grid-template-columns: 42px 42px 42px; }
.g-find { width: 91px; padding-left: 6px; }
.g-speech { width: 46px; }
.g-grammar { width: 63px; }
.g-actions { width: 190px; padding-left: 4px; }
.g-actions .tools { grid-template-columns: 36px 30px 36px 34px 46px; }
.g-show { width: 117px; padding-left: 7px; }
.g-show .tools { grid-template-columns: 35px auto; gap: 3px; }
.g-communicate { width: 116px; padding-left: 4px; }
.g-communicate .tools { grid-template-columns: 36px 36px 36px; }
.g-names { width: 82px; padding-left: 6px; }
.g-names .tools { grid-template-columns: 37px 35px; }
.g-options { width: 84px; padding-left: 7px; }
.g-options .tools { grid-template-columns: 37px 36px; }
.g-contact-tags { width: 127px; padding-left: 7px; }
.g-contact-tags .tools { grid-template-columns: 48px 32px 36px; }
.g-zoom { width: 45px; }

.respond-more {
    padding: 6px 0 0 3px;
}
.steps {
    display: flex;
    width: 202px;
    height: 54px;
    margin-top: 2px;
    border: 1px solid #c8c8c8;
    background: #fff;
}
.step-list {
    display: grid;
    flex: 1;
    grid-template-columns: 94px auto;
    grid-auto-rows: 16px;
    padding-left: 2px;
}
.step-list button {
    display: flex;
    align-items: center;
    gap: 3px;
}
.step-scroll {
    display: grid;
    grid-auto-rows: 16px;
    width: 12px;
    background: #eee;
    border-left: 1px solid #c8c8c8;
}
.step-scroll button {
    border-bottom: 1px solid #c8c8c8;
    color: #999;
}
.g-find input {
    width: 79px;
    height: 17px;
    padding: 0 2px;
    border: 1px solid #c0c0c0;
}
.g-find input::placeholder {
    color: #555;
}
.g-find .small-tools {
    padding-left: 1px;
}

/* folder pane and message list */
.workspace {
    display: flex;
    flex: 1;
    min-height: 0;
}
.folders {
    position: relative;
    width: 142px;
    background: linear-gradient(#fff, #f7f7f7 60%, #f1f1f1);
    border-right: 1px solid #d5d5d5;
}
.fold {
    position: absolute;
    top: 0;
    right: 8px;
    font-size: 14px;
}
.folders h2 {
    display: flex;
    align-items: center;
    height: 22px;
    padding-left: 6px;
    font-size: 11px;
}
.folders h2 i {
    width: 8px;
}
.folders .open::before {
    content: "";
    display: block;
    width: 5px;
    height: 5px;
    background: linear-gradient(135deg, transparent 50%, #333 50%);
}
.folders ul {
    display: grid;
    align-items: stretch;
}
.folders li {
    display: flex;
    align-items: center;
    margin-left: 2px;
    padding-left: 12px;
}
.folders li b {
    color: #2f6d94;
    font-weight: normal;
}
.folders .current {
    background: #dfdfdf;
    color: #111;
    font-weight: bold;
}
.favorites {
    height: 57px;
    margin-bottom: 8px;
}
.favorites + h2 {
    height: 30px;
    padding-top: 9px;
    border-top: 1px solid #ddd;
}
.data-file {
    height: 150px;
    margin-bottom: 18px;
}
.messages {
    flex: 1;
    padding: 12px 8px 0;
}
.search {
    display: flex;
    align-items: center;
    height: 16px;
    border: 1px solid #bbb;
}
.search input {
    flex: 1;
    height: 14px;
    border: 0;
}
.search button {
    height: 14px;
    width: 87px;
    margin-left: 8px;
    border-left: 1px solid #bbb;
    color: #555;
}
.search .caret {
    margin-left: 4px;
}
.columns {
    display: grid;
    grid-template-columns: 1fr 169px 33px;
    align-items: center;
    height: 16px;
    margin: 11px 11px 0 0;
    border: 1px solid #aaa;
    border-width: 1px 0;
    color: #444;
}
.category {
    grid-column: 2;
}
.category, .flagged {
    padding-left: 2px;
    border-left: 1px solid #aaa;
}

/* module switcher and status bar */
.modules {
    display: flex;
    align-items: center;
    height: 36px;
    padding: 3px 0 0 13px;
    gap: 15px;
    background: #e1e1e1;
    border-bottom: 1px solid #ccc;
    font: 300 19px/30px "Open Sans", "Noto Sans", sans-serif;
    color: #333;
}
.modules .current {
    color: #0f7ac8;
}
.modules button {
    display: flex;
    gap: 4px;
}
.modules i {
    width: 3px;
    height: 3px;
    border-radius: 50%;
    background: #444;
}
.status {
    display: flex;
    align-items: center;
    justify-content: space-between;
    height: 17px;
    padding: 0 6px 0 3px;
    background: #f2f2f2;
}
.view-tools {
    display: flex;
    align-items: center;
}
.view-tools button {
    display: flex;
    align-items: center;
    justify-content: center;
    width: 29px;
    height: 17px;
}
.view-tools .active {
    background: #c6c6c6;
}
.view-tools .zoom-step {
    width: 12px;
}
.view-tools input {
    appearance: none;
    width: 78px;
    height: 7px;
    background: linear-gradient(#aaa, #aaa) center / 100% 1px no-repeat;
}
.view-tools input::-webkit-slider-thumb {
    appearance: none;
    width: 1px;
    height: 5px;
    background: #888;
}
.percent {
    margin-left: 5px;
    color: #aaa;
}

/* contact window, floats over the mailbox */
.contact-window {
    position: absolute;
    top: 87px;
    right: 237px;
    bottom: 118px;
    left: 135px;
    display: flex;
    flex-direction: column;
    border: 1px solid #1b6cae;
    background: #fff;
    box-shadow: 0 1px 6px rgba(0, 0, 0, .45);
}
.contact-window .titlebar {
    height: 27px;
}
.contact-window .quick {
    padding-left: 11px;
}
.contact-window .tabs {
    height: 23px;
}
.contact-window .tabs .file {
    padding-left: 16px;
}
.contact-body {
    display: grid;
    flex: 1;
    grid-template-columns: 366px 1fr;
    gap: 7px;
    min-height: 0;
    padding: 4px 5px 6px 0;
    color: #666;
}
.fields {
    display: grid;
    grid-template-columns: 84px 174px 75px;
    grid-auto-rows: min-content;
    column-gap: 7px;
    align-content: start;
    padding-left: 19px;
}
.fields > label {
    line-height: 18px;
    white-space: nowrap;
}
.fields h3 {
    grid-column: 1 / -1;
    margin-left: -14px;
    line-height: 14px;
}
.cell {
    display: flex;
    align-items: center;
    min-height: 18px;
}
.cell.wide {
    grid-column: 2 / 4;
}
.cell input, .cell select {
    width: 100%;
    height: 16px;
    padding: 0 2px;
    border: 1px solid #aaa;
    background: #fff;
}
.cell select {
    appearance: none;
    background: linear-gradient(to bottom right, #555 50%, transparent 50%) right 2px center / 4px 4px no-repeat, linear-gradient(to bottom left, #555 50%, transparent 50%) right 6px center / 4px 4px no-repeat;
}
/* text cursor in the active field */
.cell .focus {
    border-color: #2a7aa8;
    background: linear-gradient(#222, #222) 2px center / 1px 10px no-repeat;
}
.name-button, .split button {
    height: 18px;
    padding: 0 4px;
    border: 1px solid #aaa;
    color: #444;
    text-align: left;
}
.name-button {
    width: 66px;
    margin: 1px 0;
}
.split {
    display: flex;
}
.cell.split {
    height: 20px;
}
.split button {
    display: flex;
    align-items: center;
    justify-content: center;
    gap: 2px;
}
.split button:first-child {
    width: 66px;
    justify-content: flex-start;
}
.split button:last-child {
    width: 19px;
    margin-left: -1px;
}
.avatar {
    grid-area: 1 / 3 / 5 / 4;
    align-self: start;
    width: 75px;
    height: 75px;
    margin-top: 2px;
    padding: 1px;
    border: 1px solid #aaa;
}
.mailing {
    display: flex;
    gap: 4px;
    padding-top: 4px;
    line-height: 10px;
    white-space: nowrap;
}
.mailing input {
    appearance: none;
    width: 10px;
    height: 10px;
    border: 1px solid #777;
    background: #fff;
}
.address {
    height: 56px;
    border: 1px solid #aaa;
    resize: none;
}
.map {
    display: flex;
    flex-direction: column;
    align-items: center;
    justify-content: center;
    gap: 3px;
    height: 56px;
    border: 1px solid #ddd;
    color: #aaa;
}
.notes {
    display: flex;
    flex-direction: column;
}
.business-card {
    display: flex;
    align-self: center;
    width: 196px;
    height: 118px;
    margin-top: 2px;
    padding: 1px;
    border: 1px solid #888;
    background: linear-gradient(#fff 20%, #eef4fa) content-box;
}
.business-card svg {
    height: 100%;
    background: #e2e2e2;
}
.business-card strong {
    padding: 4px 5px;
    color: #000;
    font-size: 10px;
    line-height: 13px;
}
.notes label {
    line-height: 14px;
}
.notes textarea {
    flex: 1;
    border: 1px solid #aaa;
    resize: none;
}
```
